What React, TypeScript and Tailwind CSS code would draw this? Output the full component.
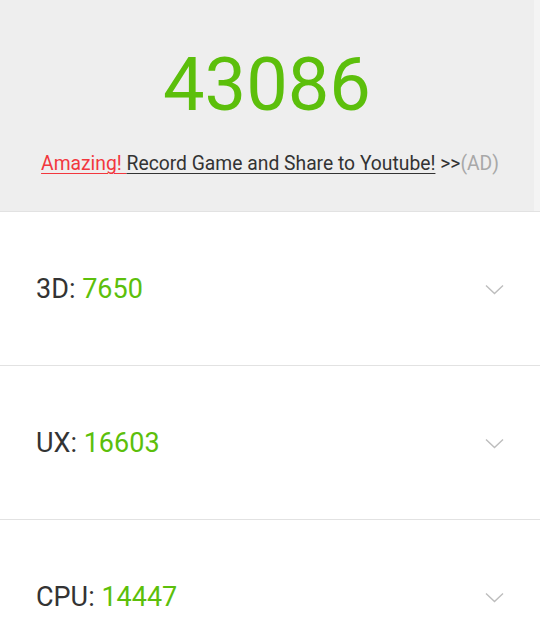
import React from 'react';

const scores = [
  { label: '3D', value: '7650' },
  { label: 'UX', value: '16603' },
  { label: 'CPU', value: '14447' },
];

const Chevron: React.FC = () => (
  <svg width="19" height="11" viewBox="0 0 19 11" fill="none" className="shrink-0">
    <path d="M1 1.5 L9.5 9.5 L18 1.5" stroke="#bdbdbd" strokeWidth="1.4" />
  </svg>
);

export default function App() {
  return (
    <div className="w-[540px] h-[634px] overflow-hidden bg-white font-['Roboto','Liberation_Sans',sans-serif]">
      {/* header with total score */}
      <div className="flex h-[212px] border-b border-[#e2e2e2]">
        <div className="flex-1 bg-[#eeeeee] flex flex-col items-center">
          <div className="mt-[40px] text-[74px] leading-[90px] text-[#5cbf0b]">43086</div>
          <div className="mt-[22px] text-[19.3px] leading-6 text-[#333333] ml-[6px]">
            <span className="underline decoration-1 underline-offset-[3px] text-[#f2373d]">Amazing! </span>
            <span className="underline decoration-1 underline-offset-[3px]">Record Game and Share to Youtube!</span>
            <span> &gt;&gt;</span>
            <span className="text-[#a8a8a8]">(AD)</span>
          </div>
        </div>
        <div className="w-[6px] bg-[#f4f4f4]" />
      </div>

      {scores.map((s) => (
        <div key={s.label} className="flex h-[154px] border-b border-[#e2e2e2]">
          <div className="flex-1 flex items-center justify-between pl-9 pr-[30px] pt-[2px]">
            <div className="text-[27px] text-[#333333]">
              {s.label}: <span className="text-[#5cbf0b]">{s.value}</span>
            </div>
            <Chevron />
          </div>
          <div className="w-[6px]" />
        </div>
      ))}
    </div>
  );
}
